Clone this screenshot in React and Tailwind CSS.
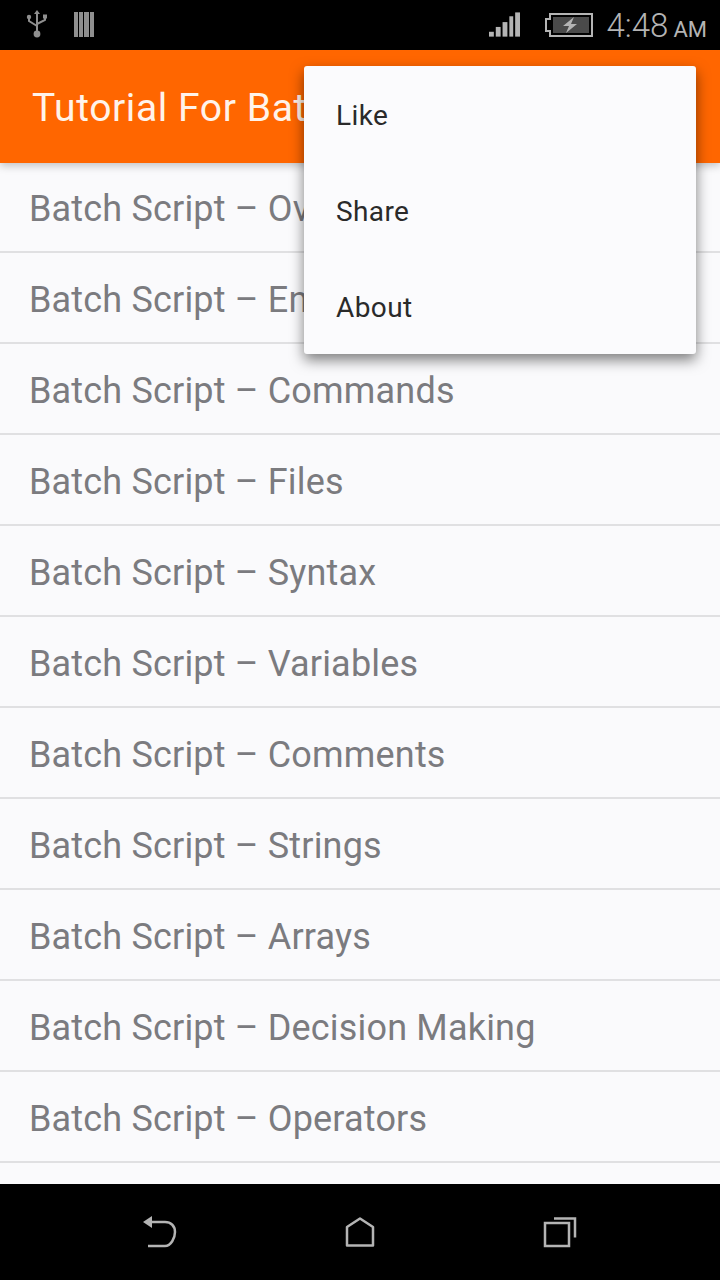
const topics = [
  'Overview',
  'Environment',
  'Commands',
  'Files',
  'Syntax',
  'Variables',
  'Comments',
  'Strings',
  'Arrays',
  'Decision Making',
  'Operators',
];

const menuItems = ['Like', 'Share', 'About'];

const StatusBar = () => (
  <div className="flex h-[50px] shrink-0 items-center bg-black pl-[26px] pr-[13px]">
    <svg width="22" height="28" viewBox="0 0 22 28" className="mb-[2px] text-[#8f8f8f]" fill="none" stroke="currentColor">
      <path d="M11 3v20" strokeWidth="2" />
      <path d="M11 0l3 4H8z" fill="currentColor" stroke="none" />
      <path d="M3 7v4l8 5M19 7v3l-8 4" strokeWidth="2" />
      <circle cx="3" cy="7" r="2.2" fill="currentColor" stroke="none" />
      <rect x="17" y="4.5" width="4" height="4" fill="currentColor" stroke="none" />
      <circle cx="11" cy="24" r="3.4" fill="currentColor" stroke="none" />
    </svg>
    <div className="ml-[26px] mb-[2px] flex h-[25px] gap-[1px]">
      <span className="w-[4.2px] bg-[#8f8f8f]" />
      <span className="w-[4.2px] bg-[#8f8f8f]" />
      <span className="w-[4.2px] bg-[#8f8f8f]" />
      <span className="w-[4.2px] bg-[#8f8f8f]" />
    </div>
    <svg width="31" height="26" viewBox="0 0 32 26" className="ml-auto mb-[1px] text-[#b4b4b4]" fill="currentColor">
      <rect x="0" y="20" width="5" height="5" />
      <rect x="7" y="15" width="5" height="10" />
      <rect x="14" y="10" width="5" height="15" />
      <rect x="21" y="4" width="4" height="21" />
      <rect x="27" y="0" width="5" height="25" />
    </svg>
    <svg width="48" height="26" viewBox="0 0 48 26" className="ml-[25px] text-[#b4b4b4]">
      <path d="M5 2h42v22H5v-5H1V7h4z" fill="none" stroke="currentColor" strokeWidth="2" />
      <rect x="8" y="5" width="36" height="16" fill="#4a4a4a" />
      <path d="M29 5l-11 9h6l-3 7 11-9h-6z" fill="currentColor" />
    </svg>
    <span className="ml-[14px] text-[33px] font-light leading-none text-[#b4b4b4]">
      4:48 <span className="ml-[-3px] text-[22px] font-normal">AM</span>
    </span>
  </div>
);

const NavBar = () => (
  <div className="flex h-[96px] shrink-0 items-center justify-between bg-black px-[143px] text-[#b4b4b4]">
    <svg width="34" height="32" viewBox="0 0 34 32" fill="none" stroke="currentColor" strokeWidth="2.5">
      <path d="M0 6l9-6v12z" fill="currentColor" stroke="none" />
      <path d="M8 6h14c6 0 10 4 10 10s-4 14-10 14H5" />
    </svg>
    <svg width="30" height="30" viewBox="0 0 30 30" fill="none" stroke="currentColor" strokeWidth="2.5" strokeLinejoin="round">
      <path d="M2 10L15 1.5 28 10v18.5H2z" />
    </svg>
    <svg width="34" height="31" viewBox="0 0 34 31" fill="none" stroke="currentColor" strokeWidth="2.5">
      <rect x="2" y="6" width="24" height="23" />
      <path d="M11 1.5h21v19" />
    </svg>
  </div>
);

export default function App() {
  return (
    <div className="relative flex h-[1280px] w-[720px] flex-col overflow-hidden bg-[#fafafc] font-['Roboto',sans-serif]">
      <StatusBar />

      <div className="flex h-[113px] shrink-0 items-center whitespace-nowrap bg-[#ff6600] pl-[32px] pt-[3px] text-[39px] leading-none tracking-[0.6px] text-[#fff3ea] shadow-[0_3px_8px_rgba(0,0,0,0.22)]">
        Tutorial For Batch Script
      </div>

      <div className="flex-1 overflow-hidden">
        {topics.map((topic) => (
          <div
            key={topic}
            className="flex h-[91px] items-center border-b-2 border-[#e0e0e2] pl-[29px] pt-[4px] text-[36px] leading-none tracking-[0.18px] text-[#7b7b7f] first:h-[90px]"
          >
            Batch Script – {topic}
          </div>
        ))}
      </div>

      <NavBar />

      {/* Overflow menu */}
      <div className="absolute left-[304px] top-[66px] w-[392px] rounded-[3px] bg-[#fbfbfd] shadow-[0_6px_14px_rgba(0,0,0,0.5)]">
        {menuItems.map((item) => (
          <div key={item} className="flex h-[96px] items-center pl-[32px] pt-[3px] text-[28px] leading-none tracking-[0.4px] text-[#2a2a2a]">
            {item}
          </div>
        ))}
      </div>
    </div>
  );
}
